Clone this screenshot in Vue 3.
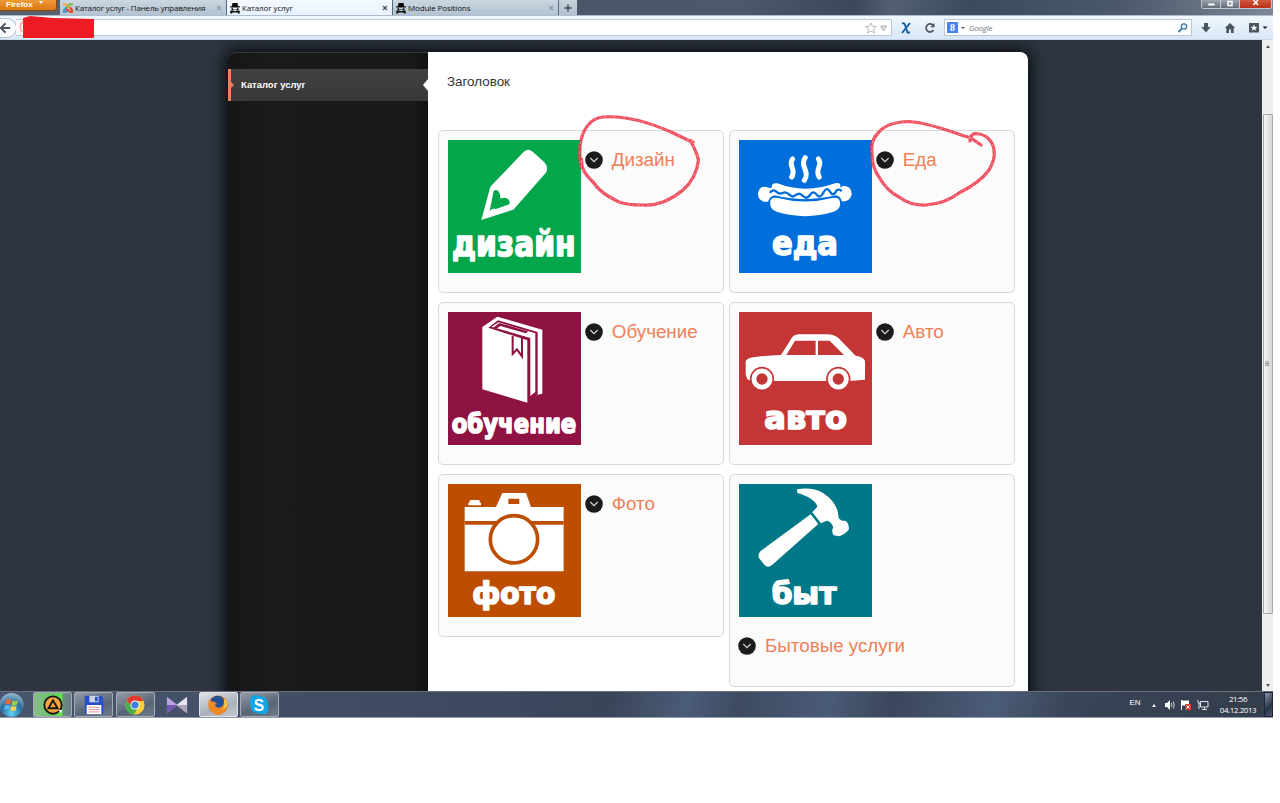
<script setup>
const tabs = [
  { id: 'admin', label: 'Каталог услуг - Панель управления', icon: 'joomla' },
  { id: 'catalog', label: 'Каталог услуг', icon: 'spy', active: true },
  { id: 'modules', label: 'Module Positions', icon: 'spy' },
]
const cards = [
  { id: 'design', title: 'Дизайн', word: 'дизайн', x: 12, w: 371, y: 347 },
  { id: 'food', title: 'Еда', word: 'еда', x: 99, w: 198, y: 346 },
  { id: 'study', title: 'Обучение', word: 'обучение', x: 11, w: 374, y: 364 },
  { id: 'auto', title: 'Авто', word: 'авто', x: 76, w: 248, y: 350 },
  { id: 'photo', title: 'Фото', word: 'фото', x: 73, w: 249, y: 361 },
  { id: 'home', title: 'Бытовые услуги', word: 'быт', x: 98, w: 194, y: 359, stacked: true },
]
</script>

<template>
  <div class="screen">
    <header class="tabstrip">
      <div class="fx"><span>Firefox</span><i></i></div>
      <div v-for="t in tabs" :key="t.id" class="tab" :class="[t.id, { active: t.active }]">
        <svg v-if="t.icon === 'joomla'" class="fav" viewBox="0 0 12 12" fill="none" stroke-width="2.1" stroke-linecap="round">
          <path d="M2 2.500Q4 1.500 6 4L9 7" stroke="#f9a541" />
          <path d="M10 2.500Q8 1.500 6.500 3.500L3 7" stroke="#7ac143" />
          <path d="M2 10Q1.500 8 4 6" stroke="#5091cd" />
          <path d="M2.500 10Q4.500 10 6 8.600" stroke="#5091cd" />
          <path d="M10 10Q8 10.500 5 7.500M10 9.500Q10.500 8 8.500 6" stroke="#f44321" />
        </svg>
        <svg v-else class="fav" viewBox="0 0 12 12" fill="#080808">
          <path d="M3.500 1h5l.6 3.200h1.700v1.300H1.200V4.200h1.700z" />
          <path d="M2.500 6.200h1.500v1.300h4V6.200h1.500v1.900H2.500z" />
          <path d="M1.300 8.600h3.200l1.500 1 1.500-1h3.200v3H8.800V10.500H3.200v1.100H1.300z" />
        </svg>
        <span class="label">{{ t.label }}</span>
        <svg class="x" viewBox="0 0 6 6"><path d="M1 1l4 4M5 1l-4 4" /></svg>
      </div>
      <div class="plus"><svg viewBox="0 0 8 8"><path d="M4 .5v7M.5 4h7" /></svg></div>
      <div class="winbtns">
        <span><svg viewBox="0 0 20 9"><path d="M7 4.500h7" stroke-width="2" /></svg></span>
        <span><svg viewBox="0 0 18 9"><rect x="7" y="1.500" width="4" height="4" stroke-width="1.500" /></svg></span>
        <span class="close"><svg viewBox="0 0 31 9"><path d="M13.500 0l4.500 5M18 0l-4.500 5" stroke-width="1.500" /></svg></span>
      </div>
    </header>

    <div class="toolbar">
      <div class="back"><svg viewBox="0 0 14 12"><path d="M7 1L2 6l5 5M2.500 6H12" /></svg></div>
      <div class="url">
        <svg class="redact" viewBox="0 0 76 24"><path d="M4 3L11 1L34 3L75 4V23H4Z" /><path d="M2 8Q0 12 3 17M4 6L1.500 10" fill="none" stroke="#f5a5a8" stroke-width="1.500" /></svg>
        <svg class="star" viewBox="0 0 24 12" fill="none" stroke="#b3b8bd"><path d="M6 .8l1.500 3.500 3.900.3-3 2.500 1 3.900L6 9 2.600 11l1-3.900-3-2.500 3.900-.3z" /><path d="M15.500 4h6l-3 5z" fill="#d7dadd" /></svg>
      </div>
      <svg class="ix" viewBox="0 0 10 12"><path d="M1 1.500Q3 .5 4 3l2.500 7.500H9M9 1L1 11" fill="none" stroke="#0b5ba5" stroke-width="1.800" /></svg>
      <svg class="reload" viewBox="0 0 12 12"><path d="M9.500 8A4 4 0 1 1 8.800 3" fill="none" stroke="#4c565f" stroke-width="1.700" /><path d="M6.200 5.300h4.300V1z" fill="#4c565f" /></svg>
      <div class="search">
        <b>8</b><i class="caret"></i><em>Google</em>
        <svg viewBox="0 0 12 12" fill="none" stroke="#3577a8"><circle cx="7" cy="4.500" r="2.700" stroke-width="1.300" /><path d="M5 6.500L1.500 10" stroke-width="1.800" /></svg>
      </div>
      <svg class="tool dl" viewBox="0 0 12 12"><path d="M4 1h4v4h2.600L6 10.500 1.400 5H4z" /></svg>
      <svg class="tool hm" viewBox="0 0 12 12"><path d="M6 1l5.200 5H9.700v5H7V7.500H5V11H2.300V6H.8z" /></svg>
      <svg class="tool bm" viewBox="0 0 20 12"><path d="M1 1h10v9.500H1z" /><path d="M6 2.700l1 2 2.200.2-1.700 1.500.6 2.200L6 7.500 3.900 8.600l.6-2.200-1.700-1.500L5 4.700z" fill="#fff" /><path d="M14.500 4.500h5L17 7z" fill="#222" /></svg>
    </div>

    <main class="viewport">
      <div class="backdrop">
        <div class="sheet">
          <nav class="side">
            <a class="item"><span>Каталог услуг</span></a>
          </nav>
          <section class="content">
            <h1>Заголовок</h1>
            <div class="grid">
              <article v-for="c in cards" :key="c.id" class="card" :class="{ stacked: c.stacked }">
                <svg class="tile" :class="c.id" viewBox="0 0 400 400" fill="#fff">
                  <g v-if="c.id === 'design'">
                    <path d="M127 140L226 37Q239 23 254 35L286 64Q302 78 295 97L196 209L100 240Z" />
                    <path class="cut" d="M125 213L137 152Q147 146 153 156Q158 164 157 176Q174 169 182 179Q187 187 184 193L144 207Q134 202 125 213Z" />
                  </g>
                  <g v-else-if="c.id === 'food'">
                    <g fill="none" stroke="#fff" stroke-width="15" stroke-linecap="round">
                      <path d="M161 57C145 74 174 88 158 111" /><path d="M199 53C180 76 215 94 196 121" /><path d="M238 57C254 74 225 88 241 111" />
                    </g>
                    <path d="M90 144Q66 133 58 155Q53 177 74 185H88Q91 170 107 166Q195 189 291 166Q306 170 308 184Q330 187 338 165Q340 137 312 138L304 143Q307 125 288 130Q198 162 115 130Q96 128 99 143Z" />
                    <path class="line" d="M93 158q10-12 19-3t19 4t20 5t20 1t21 3t21-3t20-1t20-6t20-3t19-3q10-7 16 2" />
                    <path class="gap" d="M91 193Q89 169 113 171Q198 193 283 171Q307 169 306 193Q305 210 284 218Q199 244 113 218Q93 211 91 193Z" />
                  </g>
                  <g v-else-if="c.id === 'study'">
                    <path d="M103 45L148 14L283 53V245L270 248L238 272L103 232Z" />
                    <path class="cut" d="M121 47L150 25L269 60V250L238 274V85Z" />
                    <path d="M130 44L152 31L262 64V240L247 252V78Z" />
                    <path class="cut" d="M136 47L154 33L240 58L234 64L157 42L144 51Z" />
                    <path d="M194 72V126L207 112L222 133V78" fill="none" class="cutline" />
                  </g>
                  <g v-else-if="c.id === 'auto'">
                    <path d="M20 150Q20 140 43 136Q83 130 126 129L160 75Q166 67 178 67H265Q285 67 299 79L350 131Q375 135 378 147V203L330 207H36Q21 203 20 185Z" />
                    <path class="cut" d="M168 86H230V129H142ZM237 86H272L315 129H237Z" />
                    <g class="ring"><circle cx="69" cy="201" r="34" /><circle cx="298" cy="201" r="34" /></g>
                    <g class="cut"><circle cx="69" cy="201" r="17" /><circle cx="298" cy="201" r="17" /></g>
                  </g>
                  <g v-else-if="c.id === 'photo'">
                    <path d="M66 48H94L96 56H99V64H61V56H64ZM50 69H144L163 27H234L249 69H347V262H50Z" />
                    <path class="cut" d="M181 44H214V60H181ZM50 111H347V122H50Z" />
                    <circle class="ring thick" cx="198" cy="166" r="71" />
                  </g>
                  <g v-else>
                    <path d="M174 16Q218 8 251 26Q291 52 297 87L299 101Q305 112 319 110Q330 116 330 136Q319 151 301 157L284 154Q276 143 283 130Q276 111 263 110L246 118L220 85L235 68Q228 42 175 27Z" />
                    <path d="M215 91L238 120L100 242Q86 254 76 242L60 222Q55 211 65 201Z" />
                  </g>
                  <text :x="c.x" :y="c.y" :textLength="c.w" lengthAdjust="spacingAndGlyphs">{{ c.word }}</text>
                </svg>
                <h2>
                  <svg viewBox="0 0 18 18"><circle cx="9" cy="9" r="8.800" fill="#1b1b1b" /><path d="M5.300 7L9 10.700 12.700 7" fill="none" stroke="#d5d5d5" stroke-width="1.200" /></svg>
                  <span>{{ c.title }}</span>
                </h2>
              </article>
            </div>
          </section>
        </div>
      </div>
      <div class="scroll">
        <i class="up"></i>
        <div class="thumb"><svg viewBox="0 0 6 6"><path d="M0 .5h5M0 2.500h5M0 4.500h5" stroke="#777" /></svg></div>
        <i class="down"></i>
      </div>
    </main>

    <footer class="taskbar">
      <div class="start">
        <svg viewBox="0 0 26 26">
          <defs><radialGradient id="orb" cx=".5" cy=".85" r=".9"><stop offset="0" stop-color="#5fd3f5" /><stop offset=".5" stop-color="#2a6d9f" /><stop offset="1" stop-color="#a9c4d8" /></radialGradient></defs>
          <circle cx="11.500" cy="13" r="12" fill="url(#orb)" />
          <path d="M6 8q3-1.500 5.500 0l-1 4.500q-2.800-1-5.500 0z" fill="#e8693a" /><path d="M12.500 8.500q2.500 1.300 5.500 0l-1.200 4.500q-2.500 1.200-5.300 0z" fill="#9bd04a" /><path d="M4.800 13.500q3-1.200 5.400 0l-1 4q-2.700-1-5.200 0z" fill="#58b5ee" /><path d="M11.200 14q2.700 1.200 5.400 0l-1 4.200q-2.700 1-5.300 0z" fill="#fbd24c" />
        </svg>
      </div>
      <div class="app green"><svg viewBox="0 0 24 24"><circle cx="12" cy="12" r="9.500" fill="#f5a33c" stroke="#161616" stroke-width="2" /><path d="M12 7l5 8.500H7z" fill="none" stroke="#161616" stroke-width="2" /><path d="M18 17l4 1-2 3z" fill="#fff" /></svg></div>
      <div class="app"><svg viewBox="0 0 24 24"><path d="M2 2h18l2 2v18H2z" fill="#2850c8" /><path d="M7 2h10v7H7z" fill="#cfd6e2" /><path d="M13 3h3v5h-3z" fill="#2850c8" /><path d="M4 12h16v10H4z" fill="#fff" /><path d="M6 14.500h12M6 17h12M6 19.500h12" stroke="#d88b8b" /></svg></div>
      <div class="app"><svg viewBox="0 0 24 24"><circle cx="12" cy="12" r="10.500" fill="#fbd037" /><path d="M2.900 6.700A10.500 10.500 0 0 1 21.300 7.500H12L8 14z" fill="#e0392d" /><path d="M2.900 6.700A10.500 10.500 0 0 0 11 22.500L15.500 14 8.500 14z" fill="#4bae4f" /><circle cx="12" cy="12" r="5" fill="#fff" /><circle cx="12" cy="12" r="3.900" fill="#3f7fdc" /></svg></div>
      <div class="app bare"><svg viewBox="0 0 24 24"><path d="M1 3L12.500 12 1 21z" fill="#b9a4e0" /><path d="M1 12l11.500 0L1 21z" fill="#7656b5" /><path d="M23 3L11.500 12 23 21z" fill="#e9e6f1" /><path d="M23 12H11.500L23 21z" fill="#aaa5bb" /></svg></div>
      <div class="app lit"><svg viewBox="0 0 24 24"><circle cx="12" cy="12" r="10.500" fill="#e8731c" /><circle cx="11.500" cy="9.800" r="8" fill="#234f93" /><path d="M2 6Q5 9 8 8.500L11 11 8.500 12Q10 16 15 14.500 20 12 18 5 23 10 20.500 16 17 22 11 22.500 0 20 2 6" fill="#f08a24" /><path d="M18 4Q21 12 17 17q5-1 5-6Q21.500 7 18 4" fill="#fbce45" /></svg></div>
      <div class="app"><svg viewBox="0 0 24 24"><path d="M7 1Q10 1 12 2q9 0 10 9 2 10-5 11-3 0-5-1Q3 21 2.500 12 0 3 7 1" fill="#12a5e8" /><text x="12" y="18" text-anchor="middle" class="skype">S</text></svg></div>
      <div class="tray">
        <span class="lang">EN</span><i class="up"></i>
        <svg class="ti vol" viewBox="0 0 12 12"><path d="M1 4h2l3-3v10L3 8H1z" fill="#fff" /><path d="M7.500 4q1 2 0 4M9.300 2.500q2 3.500 0 7" fill="none" stroke="#cfd5dd" /></svg>
        <svg class="ti flag" viewBox="0 0 12 12"><path d="M1.500 1v10" stroke="#fff" /><path d="M2 1.500h7v5H2z" fill="#fff" /><path d="M5 5h6v6H5z" fill="#d23c31" /><path d="M6.500 6.500l3 3M9.500 6.500l-3 3" stroke="#fff" /></svg>
        <svg class="ti net" viewBox="0 0 12 12" fill="none" stroke="#dfe3e8"><path d="M3.500 2.500H11v5.500H3.500zM1 1v3h2M2 4v6M5 10.500h5M7.500 8v2" /></svg>
        <div class="clock"><span>21:56</span><span>04.12.2013</span></div>
      </div>
      <div class="peek"></div>
    </footer>

    <svg class="marks" viewBox="0 0 440 110" fill="none">
      <defs>
        <path id="loopA" d="M8 53C6 43 7 37 7 32C9 16 17 4 30 3C55 1 80 10 98 18L121 29L117 26C121 33 124 40 125.500 46C124 59 119 68 110 76C98 86 85 92 70 91C57 91 51 90 46 88C34 82 26 77 20 68C12 60 8 55 8.500 45" />
        <path id="loopB" d="M408 31L398 24C378 18 358 9 336 7.500C320 8 311 12 306 18C299 25 298 31 299 40C299 49 301 56 306 63C311 72 318 79 326 83C334 89 343 91.500 353 91C366 90 377 86 386 79C398 73 409 66 416 56C421 48 422 42 421 36C420 28 414 21 406 20Q397 18 397 27" />
      </defs>
      <g stroke="#ec3a4d" stroke-width="3.200" stroke-linecap="round" opacity=".88"><use href="#loopA" /><use href="#loopB" /></g>
      <g stroke="#f9c6cd" stroke-width="1" stroke-dasharray="1 2.700 2 4" opacity=".6"><use href="#loopA" /><use href="#loopB" /></g>
    </svg>
  </div>
</template>

<style>
body { background: #fff; overflow: hidden; }
</style>

<style scoped>
* { box-sizing: border-box; }
svg { display: block; flex: none; }
.screen { position: relative; width: 1273px; height: 718px; display: flex; flex-direction: column; font-family: "Open Sans", "Noto Sans", sans-serif; overflow: hidden; }

.tabstrip { height: 15px; flex: none; display: flex; background: linear-gradient(100deg, #596270 0, #4b5768 45%, #4c596b 58%, #3c4859 67%, #536073 70%, #3c4a60 76%, #4b596b 88%, #7d8795 100%); }
.fx { width: 57px; height: 11px; margin-right: 3px; display: flex; align-items: flex-start; gap: 6px; padding-left: 6px; background: linear-gradient(#ee9a39, #dc7713); border: solid #8b4a12; border-width: 0 1px 1px 0; border-radius: 0 0 3px 0; color: #fff; font: 700 8px/9px "Liberation Sans", Arial, sans-serif; }
.fx i { margin-top: 1px; border: 2.500px solid transparent; border-top: 3px solid #fff; }
.tab { height: 15px; display: flex; align-items: center; background: linear-gradient(#cad6e1, #b4c3d1); border-right: 1px solid #59697c; padding: 0 4px 0 2px; font-size: 8px; color: #111; white-space: nowrap; }
.tab.admin { width: 167px; }
.tab.catalog { width: 166px; }
.tab.modules { width: 166px; }
.tab.active { background: linear-gradient(#f4f9fe, #e8f2fd); }
.fav { width: 12px; height: 12px; margin-right: 1px; }
.label { flex: 1; line-height: 12px; letter-spacing: -.12px; }
.tab.admin .label { letter-spacing: -.2px; }
.x { width: 6px; height: 6px; stroke: #929eab; stroke-width: 1.200; }
.active .x { stroke: #47525d; }
.plus { width: 18px; height: 15px; background: linear-gradient(#c6d2dd, #b1c0ce); display: flex; align-items: center; justify-content: center; }
.plus svg { width: 8px; height: 8px; stroke: #3c4650; stroke-width: 1.400; }
.winbtns { margin-left: auto; margin-right: 1px; height: 9px; display: flex; border: 1px solid #c4c8ce; border-top: 0; border-radius: 0 0 3px 3px; overflow: hidden; }
.winbtns span { width: 19px; height: 9px; background: linear-gradient(#9da4ad, #5c6673); border-right: 1px solid #c4c8ce; }
.winbtns .close { width: 31px; background: linear-gradient(#d2583f, #b92a14); border: 0; }
.winbtns svg { height: 9px; width: 100%; stroke: #fff; fill: none; }

.toolbar { height: 25px; flex: none; display: flex; align-items: center; background: linear-gradient(#f1f7fe, #d9e7f7); border-top: 1px solid #aebccd; border-bottom: 1px solid #c8d8ea; }
.back { width: 17px; height: 20px; background: #fafcff; border: 1px solid #b5c3d2; border-left: 0; border-radius: 0 10px 10px 0; display: flex; align-items: center; }
.back svg { width: 13px; height: 12px; fill: none; stroke: #4b555f; stroke-width: 2.200; margin-left: -1px; }
.url { width: 876px; height: 17px; margin-left: -1px; background: #fff; border: 1px solid #b9c7d7; border-left: 0; display: flex; align-items: center; justify-content: space-between; }
.redact { width: 76px; height: 24px; margin: -2px 0 0 3px; fill: #ed1c24; position: relative; }
.star { width: 24px; height: 12px; margin-right: 2px; }
.ix { width: 10px; height: 12px; margin-left: 9px; }
.reload { width: 12px; height: 12px; margin: 0 8px 0 13px; }
.search { width: 248px; height: 17px; display: flex; align-items: center; background: #fff; border: 1px solid #b9c7d7; padding: 0 2px; }
.search b { width: 11px; height: 11px; background: #4a82ec; color: #fff; font: 700 10px/11px "Liberation Serif", serif; text-align: center; }
.caret { margin: 2px 4px 0 3px; border: 2px solid transparent; border-top-color: #555; }
.search em { flex: 1; font-size: 8px; color: #70767c; letter-spacing: -.2px; }
.search svg { width: 12px; height: 12px; }
.tool { width: 12px; height: 12px; fill: #4c565f; }
.dl { margin-left: 8px; }
.hm { margin-left: 12px; }
.bm { width: 20px; margin-left: 12px; }

.viewport { height: 651px; flex: none; display: flex; }
.backdrop { width: 1262px; padding: 12px 0 0 228px; overflow: hidden; background:
  repeating-linear-gradient(90deg, rgba(255,255,255,.012) 0 1px, transparent 1px 4px, rgba(0,0,0,.035) 4px 5px, transparent 5px 11px, rgba(0,0,0,.03) 11px 13px, transparent 13px 31px),
  repeating-linear-gradient(0deg, rgba(255,255,255,.012) 0 1px, transparent 1px 3px, rgba(0,0,0,.035) 3px 4px, transparent 4px 13px, rgba(0,0,0,.03) 13px 14px, transparent 14px 29px), #2e3540; }
.sheet { width: 800px; height: 700px; display: flex; border-radius: 8px; background: #191919; box-shadow: 0 0 16px 2px #050608; }
.side { width: 200px; padding-top: 16px; border-top: 1px solid #3a3a3a; border-radius: 8px 0 0 0; background: linear-gradient(90deg, #161616, #1a1a1a 20%, #191919 92%, #101010); }
.item { position: relative; height: 32px; display: flex; align-items: center; padding: 0 0 2px 10px; border-left: 3px solid #ee7f5a; background: linear-gradient(#414141, #383838); color: #fff; font: 700 9.450px "Liberation Sans", Arial, sans-serif; }
.item::before { content: ""; position: absolute; left: 0; top: 13px; border: 3px solid transparent; border-left-color: #ee7f5a; border-right: 0; }
.item::after { content: ""; position: absolute; right: 0; top: 10px; border: 6px solid transparent; border-right: 5px solid #fff; border-left: 0; }
.content { width: 600px; background: #fff; border-radius: 0 8px 0 0; padding: 20px 13px 0 10px; font-family: "Liberation Sans", Arial, sans-serif; }
h1 { margin: 0 0 0 9px; height: 58px; font-size: 13.400px; font-weight: 400; line-height: 19px; color: #333; }
.grid { display: grid; grid-template-columns: 285.500px 286px; column-gap: 5.500px; row-gap: 9px; align-items: start; }
.card { height: 163px; display: flex; align-items: flex-start; background: #fbfbfb; border: 1px solid #d8d8d8; border-radius: 5px; padding: 9px; }
.card.stacked { height: 213px; flex-direction: column; }
.tile { width: 133.300px; height: 133.300px; background: var(--c); }
.design { --c: #04a64b; } .food { --c: #006edb; } .study { --c: #8e1343; } .auto { --c: #c43535; } .photo { --c: #bd4d00; } .home { --c: #007888; }
.cut { fill: var(--c); }
.gap { stroke: var(--c); stroke-width: 5; }
.line { fill: none; stroke: var(--c); stroke-width: 7; }
.cutline { stroke: var(--c); stroke-width: 6; }
.ring { stroke: var(--c); stroke-width: 5; }
.thick { stroke-width: 11; }
.tile text { font: 700 104px "DejaVu Sans", sans-serif; stroke: #fff; stroke-width: 5; stroke-linejoin: round; }
.food text { font-size: 99px; }
.study text { font-size: 82px; }
.auto text { font-size: 95px; }
.photo text { font-size: 89px; }
.home text { font-size: 89px; }
h2 { margin: 10px 0 0 3.500px; display: flex; align-items: center; gap: 9px; height: 20px; color: #ef8057; font-size: 18.800px; font-weight: 400; line-height: 20px; white-space: nowrap; }
h2 svg { width: 18px; height: 18px; margin-top: -1px; }
.stacked h2 { margin: 19px 0 0 -1px; }

.scroll { width: 11px; background: #eeeff0; display: flex; flex-direction: column; align-items: center; }
.scroll i { border: 2.500px solid transparent; }
.up { border-bottom: 3px solid #555 !important; border-top: 0 !important; margin-top: 5px; }
.down { border-top: 3px solid #555 !important; border-bottom: 0 !important; margin-top: auto; margin-bottom: 4px; }
.thumb { width: 10px; height: 500px; margin-top: 66px; background: linear-gradient(90deg, #f5f5f5, #d6d7d8); border: 1px solid #a5a7aa; border-radius: 1px; display: flex; align-items: center; justify-content: center; }
.thumb svg { width: 5px; height: 6px; }

.taskbar { height: 27px; flex: none; display: flex; align-items: stretch; border-top: 1px solid #676f7d; border-bottom: 1px solid #929baa; background: linear-gradient(100deg, #48566d 0, #3e4a62 35%, #3a455b 48%, #4b5c77 54%, #3d4a62 58%, #4a5b76 65%, #3a465c 70%, #4b5c77 78%, #394458 84%, #343d4a 100%); }
.start { width: 33px; }
.start svg { width: 26px; height: 26px; }
.app { width: 39px; margin-right: 2.400px; display: flex; align-items: center; justify-content: center; background: linear-gradient(160deg, #949ba7, #596476 60%, #707b8b); border: 1px solid #a4abb5; border-radius: 2px; }
.app svg { width: 22px; height: 22px; }
.app.green { background: linear-gradient(90deg, #8bbb8b, #69c56a 45%, #5fe34b 76%, #6f8b80 78%, #68808b); }
.app.bare { background: none; border-color: transparent; }
.app.lit { background: linear-gradient(160deg, #e1e4e8, #a9b0ba 60%, #c5cad1); border-color: #dfe2e6; }
.skype { fill: #fff; font: 700 17px "Liberation Sans", sans-serif; }
.tray { margin-left: auto; display: flex; align-items: center; color: #fff; font-size: 8px; }
.lang { width: 22px; margin-top: -4px; font-family: "Liberation Sans", sans-serif; }
.tray .up { border: 2.500px solid transparent; border-bottom-color: #fff !important; margin-top: 2px; margin-right: 8px; }
.ti { width: 12px; height: 12px; margin: 1px 4.500px 0 0; }
.clock { width: 44px; display: flex; flex-direction: column; align-items: center; line-height: 11px; letter-spacing: -.45px; margin: 0 4px 1px 3px; white-space: nowrap; }
.peek { width: 9px; background: linear-gradient(135deg, #8793a5, #27354b 60%, #4a5a72); border: 1px solid #1d2634; }

.marks { position: absolute; left: 573px; top: 114px; width: 440px; height: 110px; }
</style>
